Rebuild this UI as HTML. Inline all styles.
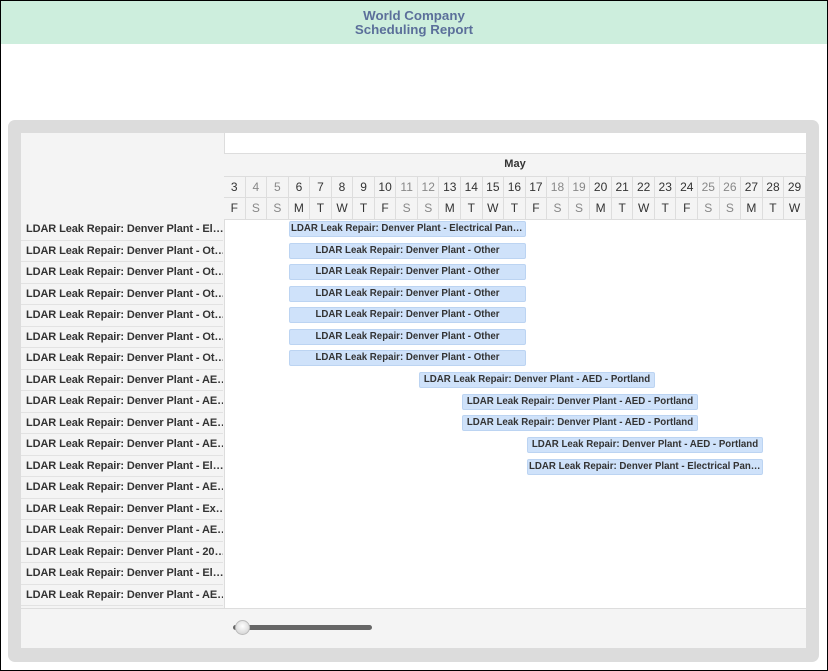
<!DOCTYPE html>
<html><head><meta charset="utf-8"><style>
*{box-sizing:border-box;margin:0;padding:0}
body{width:828px;height:671px;overflow:hidden;background:#fff;font-family:"Liberation Sans",Arial,sans-serif;position:relative}
.frame{position:absolute;left:0;top:0;width:828px;height:671px;border:1px solid #000}
.hdr{position:absolute;left:1px;top:1px;width:826px;height:43px;background:#cdeedd;text-align:center;color:#5b6f9a;font-weight:bold;font-size:13.3px;line-height:14px;padding-top:8px}
.panel{position:absolute;left:8px;top:120px;width:811px;height:542px;background:#dcdcdc;border-radius:7px}
.inner{position:absolute;left:21px;top:133px;width:785px;height:515px;background:#f4f4f4}
.tl{position:absolute;left:224px;top:133px;width:582px;height:475px;background:#fff;border-left:1px solid #ddd}
.hl{position:absolute;left:224px;height:1px;background:#ddd;width:582px}
.may{position:absolute;left:224px;top:154px;width:582px;height:22px;background:#f4f4f4;text-align:center;font-size:11px;font-weight:bold;color:#333;line-height:21px}
.row{position:absolute;left:224px;width:582px;height:22px;display:flex;background:#f4f4f4}
.row div{width:21.55px;flex:none;border-right:1px solid #ddd;border-bottom:1px solid #ddd;text-align:center;font-size:12px;line-height:21px;color:#333}
.row div.w{color:#888}
.lbl{position:absolute;left:21px;width:202px;height:21.5px;border-bottom:1px solid #e2e2e2;font-size:11px;font-weight:bold;color:#333;line-height:21px;padding-left:5px;white-space:nowrap;overflow:hidden;letter-spacing:-0.1px}
.bar{position:absolute;height:16px;background:#cfe2fa;border:1px solid #bcd4f2;border-radius:2px;font-size:9.7px;font-weight:bold;color:#333;line-height:14px;text-align:center;white-space:nowrap;overflow:hidden;text-overflow:clip;padding:0 1px}
.foot{position:absolute;left:21px;top:608px;width:785px;height:1px;background:#ddd}
.track{position:absolute;left:233px;top:625px;width:139px;height:5px;background:#666;border-radius:3px}
.knob{position:absolute;left:235px;top:620px;width:15px;height:15px;border-radius:50%;background:radial-gradient(circle at 50% 40%,#fff,#ccc);border:1px solid #bbb}
</style></head><body>
<div class="frame"></div>
<div class="hdr">World Company<br>Scheduling Report</div>
<div class="panel"></div>
<div class="inner"></div>
<div class="tl"></div>
<div class="hl" style="top:153px"></div>
<div class="may">May</div>
<div class="row" style="top:176px;border-top:1px solid #ddd">
<div>3</div><div class="w">4</div><div class="w">5</div><div>6</div><div>7</div><div>8</div><div>9</div><div>10</div><div class="w">11</div><div class="w">12</div><div>13</div><div>14</div><div>15</div><div>16</div><div>17</div><div class="w">18</div><div class="w">19</div><div>20</div><div>21</div><div>22</div><div>23</div><div>24</div><div class="w">25</div><div class="w">26</div><div>27</div><div>28</div><div>29</div></div>
<div class="row" style="top:198px">
<div>F</div><div class="w">S</div><div class="w">S</div><div>M</div><div>T</div><div>W</div><div>T</div><div>F</div><div class="w">S</div><div class="w">S</div><div>M</div><div>T</div><div>W</div><div>T</div><div>F</div><div class="w">S</div><div class="w">S</div><div>M</div><div>T</div><div>W</div><div>T</div><div>F</div><div class="w">S</div><div class="w">S</div><div>M</div><div>T</div><div>W</div></div>

<div class="lbl" style="top:219px">LDAR Leak Repair: Denver Plant - El…</div>
<div class="lbl" style="top:240.5px">LDAR Leak Repair: Denver Plant - Ot…</div>
<div class="lbl" style="top:262px">LDAR Leak Repair: Denver Plant - Ot…</div>
<div class="lbl" style="top:283.5px">LDAR Leak Repair: Denver Plant - Ot…</div>
<div class="lbl" style="top:305px">LDAR Leak Repair: Denver Plant - Ot…</div>
<div class="lbl" style="top:326.5px">LDAR Leak Repair: Denver Plant - Ot…</div>
<div class="lbl" style="top:348px">LDAR Leak Repair: Denver Plant - Ot…</div>
<div class="lbl" style="top:369.5px">LDAR Leak Repair: Denver Plant - AE…</div>
<div class="lbl" style="top:391px">LDAR Leak Repair: Denver Plant - AE…</div>
<div class="lbl" style="top:412.5px">LDAR Leak Repair: Denver Plant - AE…</div>
<div class="lbl" style="top:434px">LDAR Leak Repair: Denver Plant - AE…</div>
<div class="lbl" style="top:455.5px">LDAR Leak Repair: Denver Plant - El…</div>
<div class="lbl" style="top:477px">LDAR Leak Repair: Denver Plant - AE…</div>
<div class="lbl" style="top:498.5px">LDAR Leak Repair: Denver Plant - Ex…</div>
<div class="lbl" style="top:520px">LDAR Leak Repair: Denver Plant - AE…</div>
<div class="lbl" style="top:541.5px">LDAR Leak Repair: Denver Plant - 20…</div>
<div class="lbl" style="top:563px">LDAR Leak Repair: Denver Plant - El…</div>
<div class="lbl" style="top:584.5px">LDAR Leak Repair: Denver Plant - AE…</div>

<div class="bar" style="left:289px;top:221px;width:237px;text-align:left">LDAR Leak Repair: Denver Plant - Electrical Pan…</div>
<div class="bar" style="left:289px;top:243px;width:237px">LDAR Leak Repair: Denver Plant - Other</div>
<div class="bar" style="left:289px;top:264px;width:237px">LDAR Leak Repair: Denver Plant - Other</div>
<div class="bar" style="left:289px;top:286px;width:237px">LDAR Leak Repair: Denver Plant - Other</div>
<div class="bar" style="left:289px;top:307px;width:237px">LDAR Leak Repair: Denver Plant - Other</div>
<div class="bar" style="left:289px;top:329px;width:237px">LDAR Leak Repair: Denver Plant - Other</div>
<div class="bar" style="left:289px;top:350px;width:237px">LDAR Leak Repair: Denver Plant - Other</div>
<div class="bar" style="left:419px;top:372px;width:236px">LDAR Leak Repair: Denver Plant - AED - Portland</div>
<div class="bar" style="left:462px;top:394px;width:236px">LDAR Leak Repair: Denver Plant - AED - Portland</div>
<div class="bar" style="left:462px;top:415px;width:236px">LDAR Leak Repair: Denver Plant - AED - Portland</div>
<div class="bar" style="left:527px;top:437px;width:236px">LDAR Leak Repair: Denver Plant - AED - Portland</div>
<div class="bar" style="left:527px;top:459px;width:236px;text-align:left">LDAR Leak Repair: Denver Plant - Electrical Pan…</div>

<div class="foot"></div>
<div class="track"></div>
<div class="knob"></div>
</body></html>
